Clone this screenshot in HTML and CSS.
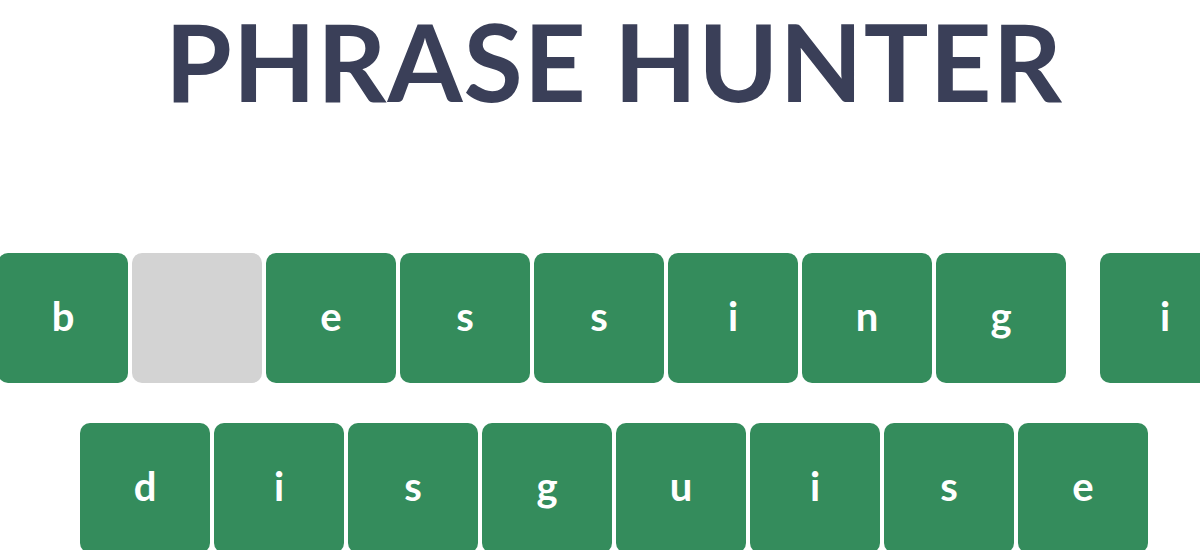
FILE: index.html
```html
<!DOCTYPE html>
<html lang="en">
<head>
<meta charset="utf-8">
<title>Phrase Hunter</title>
<link rel="stylesheet" href="styles.css">
</head>
<body>
  <header class="banner">
    <h1 class="header">PHRASE HUNTER</h1>
  </header>
  <main class="phrase">
    <ul class="row row-first">
      <li class="letter show">b</li>
      <li class="letter hide">l</li>
      <li class="letter show">e</li>
      <li class="letter show">s</li>
      <li class="letter show">s</li>
      <li class="letter show">i</li>
      <li class="letter show">n</li>
      <li class="letter show">g</li>
      <li class="space"></li>
      <li class="letter show">i</li>
      <li class="letter show">n</li>
    </ul>
    <ul class="row row-second">
      <li class="letter show">d</li>
      <li class="letter show">i</li>
      <li class="letter show">s</li>
      <li class="letter show">g</li>
      <li class="letter show">u</li>
      <li class="letter show">i</li>
      <li class="letter show">s</li>
      <li class="letter show">e</li>
    </ul>
  </main>
</body>
</html>
```

FILE: styles.css
```css
html, body {
  margin: 0;
  padding: 0;
  background: #ffffff;
  overflow: hidden;
  font-family: "Lato", "Liberation Sans", sans-serif;
}

.banner {
  box-sizing: border-box;
  display: flex;
  justify-content: center;
  align-items: flex-start;
  height: 253px;
  padding-left: 28px;
}

.header {
  margin: -4px 0 0;
  padding: 0;
  font-size: 108px;
  font-weight: 700;
  color: #3a3f58;
  line-height: 1.2;
  letter-spacing: 1px;
  font-kerning: none;
  white-space: nowrap;
}

.phrase {
  display: flex;
  flex-direction: column;
  gap: 40px;
}

.row {
  list-style: none;
  margin: 0;
  padding: 0;
  display: flex;
  gap: 4px;
}

.row-first {
  margin-left: -2px;
}

.row-second {
  margin-left: 80px;
}

.letter {
  flex: 0 0 130px;
  height: 130px;
  border-radius: 10px;
  display: flex;
  align-items: center;
  justify-content: center;
  font-size: 40px;
  font-weight: 700;
  color: #ffffff;
  box-sizing: border-box;
  padding-bottom: 4px;
}

.show {
  background: #348c5c;
}

.hide {
  background: #d3d3d3;
  color: transparent;
}

.space {
  flex: 0 0 26px;
}
```
